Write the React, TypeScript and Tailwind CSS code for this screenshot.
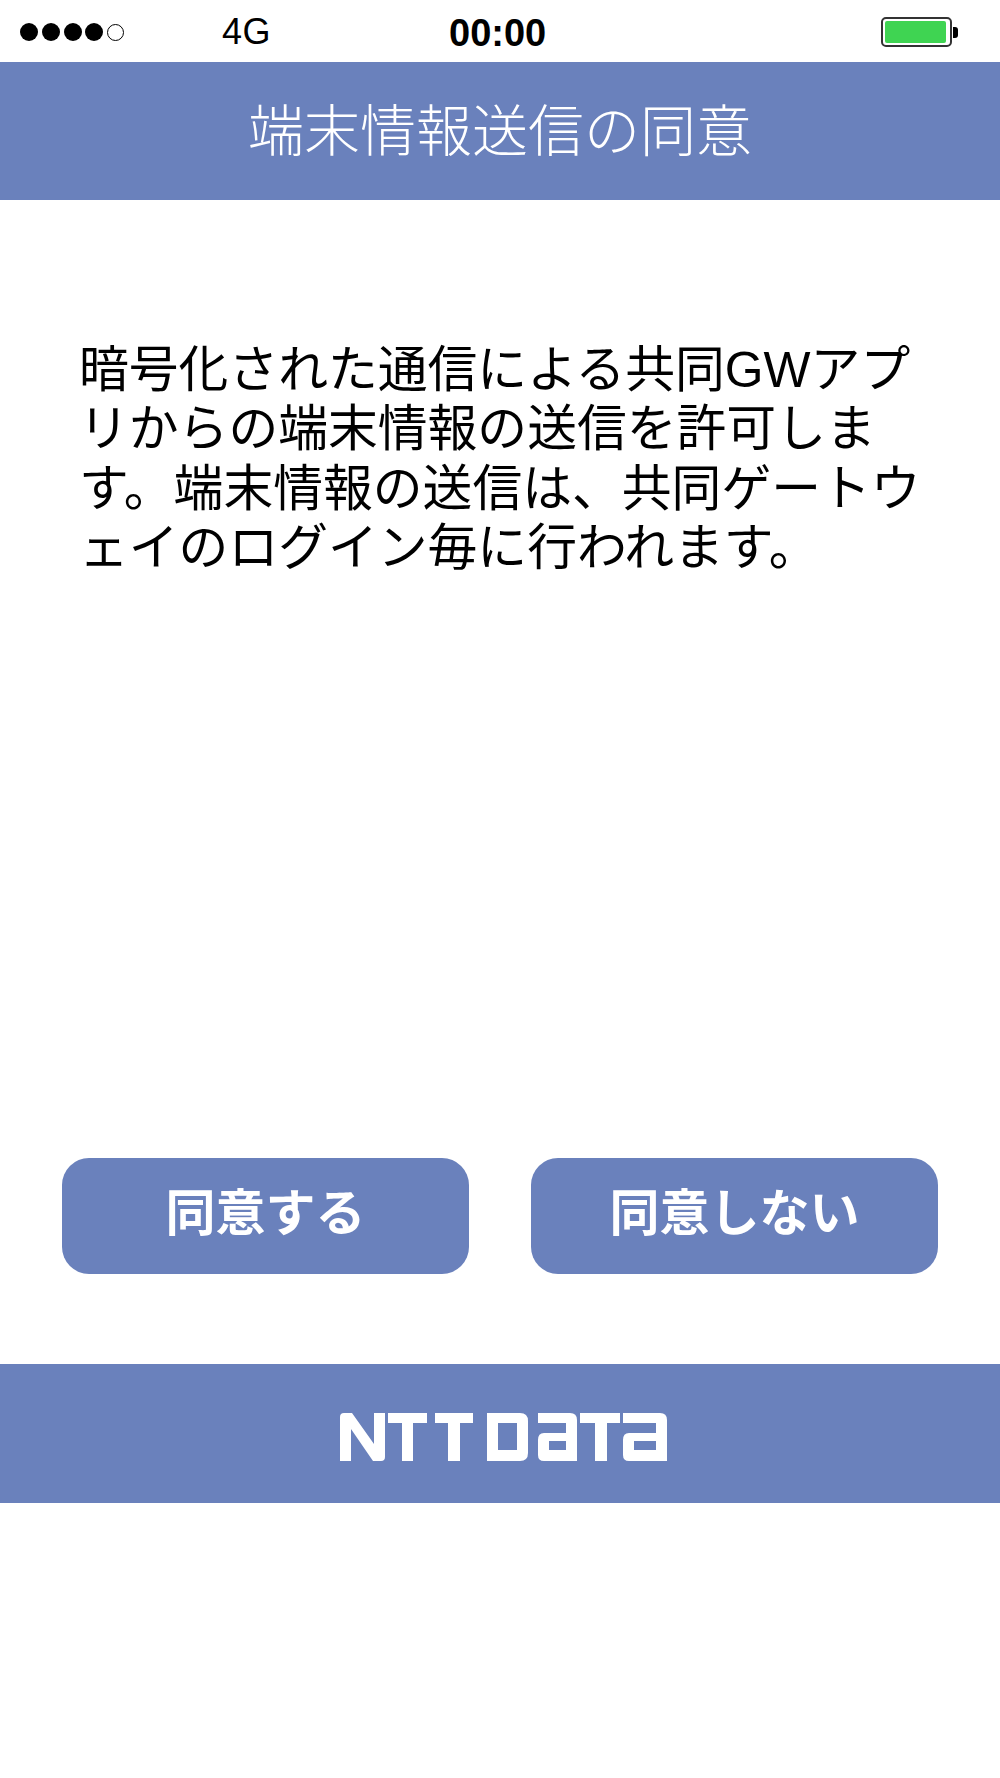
const font = '"Liberation Sans", "Noto Sans CJK JP", sans-serif';

function Logo() {
  return (
    <svg width="330" height="48" viewBox="0 0 330 48" fill="#fff" className="block blur-[0.6px]">
      <path d="M2 4Q2 0 6 0H14L36 31V0H47V44Q47 48 43 48H35L13 16V48H2Z" />
      <path d="M50 0H89V10H75V48H64V10H50Z" />
      <path d="M97 0H135V10H122V48H110V10H97Z" />
      <path fillRule="evenodd" d="M149 0H182Q190 0 190 8V40Q190 48 182 48H149ZM160 10V37H179V10Z" />
      <path fillRule="evenodd" d="M200 0H232Q239 0 239 7V48H206Q200 48 200 42V27Q200 20 206 20H228V10H200ZM211 28V37H228V28Z" />
      <path d="M242 0H282V10H269V48H257V10H242Z" />
      <path fillRule="evenodd" d="M285 0H322Q329 0 329 7V48H291Q285 48 285 42V27Q285 20 291 20H318V10H285ZM296 28V37H318V28Z" />
    </svg>
  );
}

export default function App() {
  return (
    <div className="min-h-[1778px] bg-white flex flex-col" style={{ fontFamily: font }}>
      <div className="h-[62px] relative flex items-center text-black pt-[2px]">
        <div className="flex items-center gap-[3.75px] ml-[20px] w-[200px]">
          {[0, 1, 2, 3].map((i) => (
            <span key={i} className="w-[18px] h-[18px] rounded-full bg-black" />
          ))}
          <span className="w-[17px] h-[17px] rounded-full border border-black" />
        </div>
        <span className="text-[36px] leading-none ml-[2px] tracking-[0.5px]">4G</span>
        <span className="absolute left-[449px] top-[14px] text-[38px] leading-none font-bold">00:00</span>
        <div className="absolute left-[881px] top-[17px] flex items-center">
          <div className="w-[71px] h-[30px] rounded-[5px] border-2 border-[#333] p-[2px] pr-[4px]">
            <div className="w-full h-full bg-[#3fd452] rounded-[2px]" />
          </div>
          <div className="w-[5px] h-[11px] bg-black rounded-r-[3px] ml-[1px]" />
        </div>
      </div>

      <header className="h-[138px] bg-[#6a81bc] flex items-center justify-center text-white text-[56px] leading-none font-light pt-[2px]">
        端末情報送信の同意
      </header>

      <main className="h-[1164px] flex flex-col">
        <p className="mt-[141px] ml-[79px] text-[49.8px] leading-[59.3px] text-black whitespace-nowrap font-normal">
          暗号化された通信による共同GWアプ
          <br />
          リからの端末情報の送信を許可しま
          <br />
          す。端末情報の送信は、共同ゲートウ
          <br />
          ェイのログイン毎に行われます。
        </p>
        <div className="mt-auto mb-[90px] px-[62px] grid grid-cols-2 gap-[62px]">
          <button className="h-[116px] rounded-[27px] bg-[#6a81bc] text-white text-[50px] leading-none font-bold pb-[4px]">
            同意する
          </button>
          <button className="h-[116px] rounded-[27px] bg-[#6a81bc] text-white text-[50px] leading-none font-bold pb-[4px]">
            同意しない
          </button>
        </div>
      </main>

      <footer className="h-[139px] bg-[#6a81bc] flex items-center justify-center pl-[6px] pt-[7px]">
        <Logo />
      </footer>
    </div>
  );
}
